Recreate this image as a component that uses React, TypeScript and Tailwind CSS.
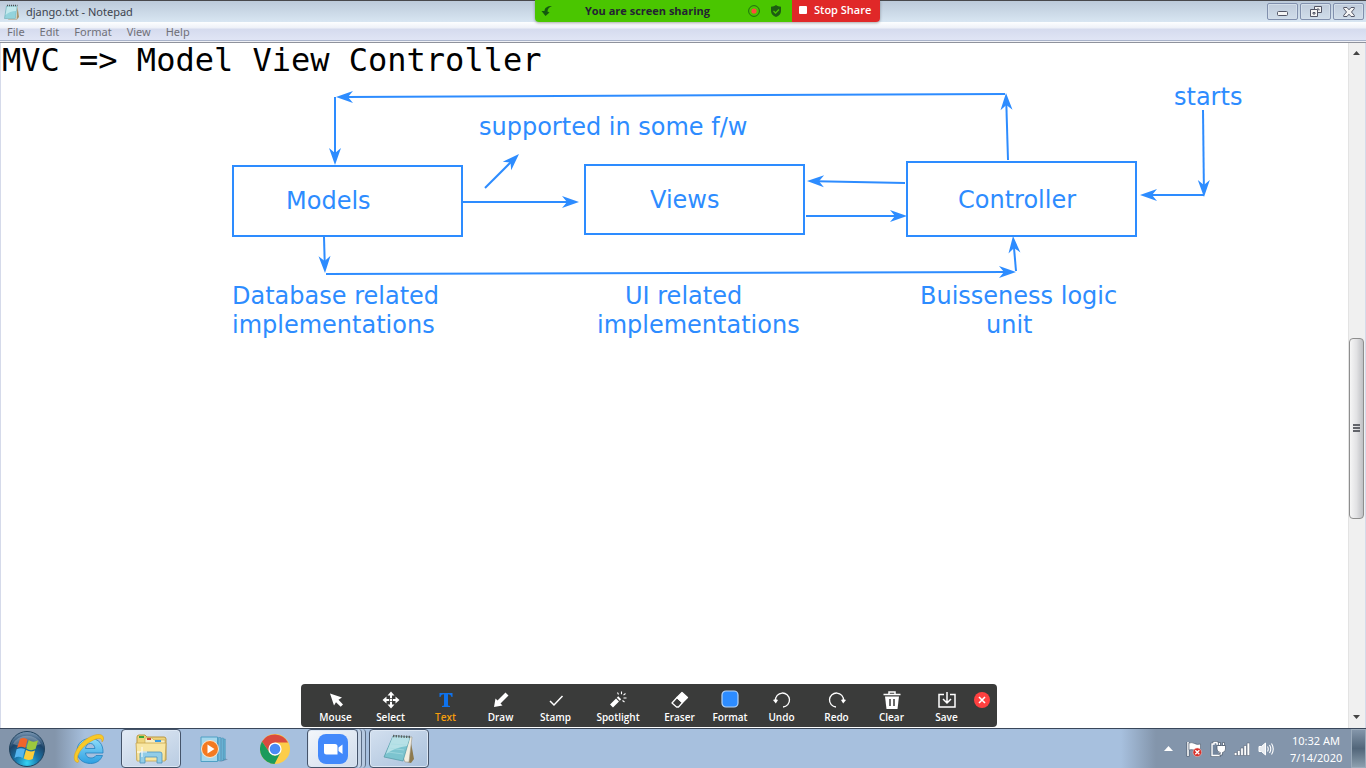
import type { ReactNode } from 'react';

type Point = [number, number];

const BLUE = '#2d8cff';

const arrows: [Point, Point][] = [
  [[1005, 94], [336, 97]],
  [[335, 97], [335, 165]],
  [[324, 237], [325, 273]],
  [[326, 274], [1016, 272]],
  [[1016, 271], [1013, 236]],
  [[1008, 160], [1006, 93]],
  [[463, 202], [579, 202]],
  [[485, 188], [519, 154]],
  [[905, 183], [807, 181]],
  [[806, 216], [907, 216]],
  [[1203, 110], [1204, 197]],
  [[1204, 195], [1140, 195]],
];

function Arrow({ from, to }: { from: Point; to: Point }) {
  const [x1, y1] = from;
  const [x2, y2] = to;
  const angle = (Math.atan2(y2 - y1, x2 - x1) * 180) / Math.PI;
  const length = Math.hypot(x2 - x1, y2 - y1);
  return (
    <g transform={`translate(${x2} ${y2}) rotate(${angle})`}>
      <path d={`M${-length} 0H-10`} stroke={BLUE} strokeWidth="2" />
      <path d="M0 0L-17 -6L-12 0L-17 6Z" fill={BLUE} />
    </g>
  );
}

function Diagram() {
  return (
    <section
      aria-label="MVC diagram"
      className="pointer-events-none absolute inset-0 overflow-hidden font-['DejaVu_Sans',sans-serif] text-2xl leading-[29px] text-[#2d8cff]"
    >
      <svg className="absolute left-0 top-0 h-[400px] w-[1340px]" viewBox="0 0 1340 400" fill="none" aria-hidden="true">
        {arrows.map(([from, to], i) => (
          <Arrow key={i} from={from} to={to} />
        ))}
      </svg>
      <div className="absolute left-[232px] top-[165px] flex h-[72px] w-[231px] items-center border-2 border-[#2d8cff] pl-[52px]">Models</div>
      <div className="absolute left-[584px] top-[164px] flex h-[71px] w-[221px] items-center border-2 border-[#2d8cff] pl-16 pt-0.5">Views</div>
      <div className="absolute left-[906px] top-[161px] flex h-[76px] w-[231px] items-center border-2 border-[#2d8cff] pl-[50px] pt-0.5">Controller</div>
      <p className="absolute left-[479px] top-[113px] whitespace-nowrap">supported in some f/w</p>
      <p className="absolute left-[1174px] top-[83px] whitespace-nowrap">starts</p>
      <p className="absolute left-[232px] top-[282px] whitespace-nowrap">
        Database related
        <br />
        implementations
      </p>
      <p className="absolute left-[597px] top-[282px] whitespace-nowrap indent-7">
        UI related
        <span className="block indent-0">implementations</span>
      </p>
      <p className="absolute left-[920px] top-[282px] whitespace-nowrap">
        Buisseness logic
        <span className="block pl-[66px]">unit</span>
      </p>
    </section>
  );
}

function NotepadIcon({ className }: { className: string }) {
  return (
    <svg className={className} viewBox="0 0 32 32" aria-hidden="true">
      <path d="M27 4l4 22-3 4-4-1z" fill="#8d7a4e" />
      <path d="M11 3L29 4L26 29L22 29Z" fill="#f3eee0" stroke="#9a9484" strokeWidth=".6" />
      <path d="M10 3L27 4L20 28L1 24Z" fill="#7cc4cf" stroke="#4f96a3" strokeWidth=".7" />
      <path d="M10 3L27 4L24 13Q13 14 3 21Z" fill="#c5e9ec" opacity=".8" />
      <path d="M10 3L27 4" stroke="#5a5f60" strokeWidth="2.4" strokeDasharray="1.4 1.2" />
      <path d="M8 11l15 1M6 15l15 2M5 19l15 2" stroke="#a9dce2" strokeWidth=".7" />
    </svg>
  );
}

function NotepadSmallIcon() {
  return (
    <svg className="size-4" viewBox="0 0 16 16" aria-hidden="true">
      <path d="M14.500 2.500L16 13l-2 2.500H5z" fill="#a8946c" />
      <path d="M4 2h10.500l-1 13H4z" fill="#f6f3ea" />
      <path d="M3.500 2H14l-1.500 12.500H1.500z" fill="#93d3dc" stroke="#68a9b4" strokeWidth=".6" />
      <path d="M4 2.500h9.500L13 7Q7 7 2.500 11z" fill="#cdeef0" opacity=".8" />
      <path d="M4 1.500h10.500" stroke="#4a5154" strokeWidth="1.600" strokeDasharray="1 1" />
    </svg>
  );
}

function TitleBar() {
  const control =
    'flex h-[17px] w-[31px] items-center justify-center rounded-[2px] border border-[#8190ad] bg-gradient-to-b from-[#bfcbdb] to-[#d0ddea] shadow-[inset_0_0_0_1px_#d3deea]';
  return (
    <header className="flex h-[22px] items-center justify-between border-t border-[#48484c] bg-gradient-to-b from-[#bccada] to-[#d8e6f2] pl-[3px] pr-[2px]">
      <div className="flex items-center gap-[7px]">
        <NotepadSmallIcon />
        <h1 className="font-['Noto_Sans',sans-serif] text-[11px] leading-4 text-[#3d444e]">django.txt - Notepad</h1>
      </div>
      <div className="flex gap-0.5">
        <button className={control} aria-label="Minimize">
          <svg className="mt-[3px] h-[5px] w-[11px]" viewBox="0 0 11 5">
            <rect x=".5" y=".5" width="10" height="4" rx="1" fill="#f4f4f4" stroke="#535666" />
          </svg>
        </button>
        <button className={control} aria-label="Restore">
          <svg className="h-[11px] w-[12px]" viewBox="0 0 12 11" fill="#f4f4f4" stroke="#535666">
            <path d="M4.500 .5h7v6h-7zM7 3h2v1.500" />
            <path d="M.5 3.500h7v7h-7zM3 6.500h2v1.500h-2z" />
          </svg>
        </button>
        <button className={control} aria-label="Close">
          <svg className="h-[10px] w-[12px]" viewBox="0 0 12 10" fill="#f4f4f4" stroke="#535666">
            <path d="M.7.500h3.300l2 2.300 2-2.300h3.300v1.200L8.500 5l2.800 3.300v1.200H8L6 7.200 4 9.500H.7V8.300L3.500 5 .7 1.700z" />
          </svg>
        </button>
      </div>
    </header>
  );
}

function ShareBar() {
  return (
    <div className="absolute left-[535px] top-0 flex h-[22px] overflow-hidden rounded-b font-['Open_Sans',sans-serif] shadow-[0_1px_3px_rgba(0,0,0,0.35)]">
      <div className="flex w-[257px] items-center bg-[#4ac600] pl-[6px] pr-[10px]">
        <svg className="size-3" viewBox="0 0 12 12" aria-hidden="true">
          <path d="M11 1C6 1 3.500 3 3.500 6H.5L4.500 11 8.500 7.500 6.500 6.500C6.500 4 8 2 11 1z" fill="#14590f" />
        </svg>
        <p className="flex-1 pr-1.5 text-center text-[11px] font-bold leading-4 text-[#232333]">You are screen sharing</p>
        <svg className="mr-2.5 size-3" viewBox="0 0 12 12" aria-hidden="true">
          <circle cx="6" cy="6" r="5.400" fill="none" stroke="#1e7010" />
          <circle cx="6" cy="6" r="2.600" fill="#ff4a3c" />
        </svg>
        <svg className="size-3" viewBox="0 0 12 12" aria-hidden="true">
          <path d="M6 0C4.500 1.200 3 1.600 1 1.700V6c0 3 2 5 5 6 3-1 5-3 5-6V1.700C9 1.600 7.500 1.200 6 0z" fill="#1d5c12" />
          <path d="M3.500 6l2 2L9 4.500" fill="none" stroke="#4ac600" strokeWidth="1.300" />
        </svg>
      </div>
      <button className="flex w-[88px] items-center gap-[7px] bg-[#e02828] pb-0.5 pl-[7px] text-[11px] font-semibold leading-4 text-white">
        <span className="size-2 rounded-[1px] bg-white" />
        <span className="whitespace-nowrap">Stop Share</span>
      </button>
    </div>
  );
}

function MenuBar() {
  return (
    <nav className="flex h-[21px] shrink-0 items-start gap-[15px] border-b border-[#8f929c] bg-[linear-gradient(#fdfeff_0,#eef1f8_6px,#d5dbee_7px,#e0e5f5_18px,#a9b3ca_18px,#a9b3ca_19px,#f0f1f6_19px)] pl-[7px] pt-0.5 font-['Noto_Sans',sans-serif] text-[11px] leading-4 text-[#707078]">
      {['File', 'Edit', 'Format', 'View', 'Help'].map((name) => (
        <button key={name}>{name}</button>
      ))}
    </nav>
  );
}

function ScrollBar() {
  return (
    <div className="flex w-[17px] shrink-0 flex-col items-center border-l border-[#e3e3e3] bg-[#f0f0f0] pr-px">
      <button className="flex h-[19px] w-full items-center justify-center" aria-label="Scroll up">
        <svg className="h-[4px] w-[7px]" viewBox="0 0 7 4"><path d="M0 4L3.500 0 7 4z" fill="#444" /></svg>
      </button>
      <div className="flex-[277]" />
      <div className="flex w-[15px] flex-[179] flex-col items-center justify-center gap-px rounded-sm border border-[#8e8e8e] bg-gradient-to-r from-[#f6f6f6] via-[#e2e2e4] to-[#bfc0c4]">
        <span className="h-0.5 w-[7px] bg-[#62646a]" />
        <span className="h-0.5 w-[7px] bg-[#62646a]" />
        <span className="h-0.5 w-[7px] bg-[#62646a]" />
      </div>
      <div className="flex-[189]" />
      <button className="flex h-[21px] w-full items-center justify-center" aria-label="Scroll down">
        <svg className="h-[4px] w-[7px]" viewBox="0 0 7 4"><path d="M0 0L3.500 4 7 0z" fill="#444" /></svg>
      </button>
    </div>
  );
}

const tools: { name: string; width: string; icon: ReactNode }[] = [
  { name: 'Mouse', width: 'w-[55px]', icon: <path d="M4 3.500l12 4-3.500 2.300 4.500 4.700-2.300 2.300L10 12.300 8 15.500z" fill="#fff" /> },
  {
    name: 'Select',
    width: 'w-[55px]',
    icon: (
      <g fill="#fff">
        <path d="M10 1.500l3.500 4h-7zM10 18.500l3.500-4h-7zM1.500 10l4-3.500v7zM18.500 10l-4-3.500v7z" />
        <path d="M9 5h2v3H9zM9 12h2v3H9zM5 9h3v2H5zM12 9h3v2h-3zM8.800 8.800h2.400v2.400H8.800z" />
      </g>
    ),
  },
  {
    name: 'Text',
    width: 'w-[55px]',
    icon: <path d="M3.500 3H16.500V7H15.500C15 5 14 4.200 12 4.200V15.500L14 16V17H6V16L8 15.500V4.200C6 4.200 5 5 4.500 7H3.500z" fill="#0e72ed" />,
  },
  { name: 'Draw', width: 'w-[55px]', icon: <path d="M14.500 2.500l3 3L9.500 13.500l2 2-8.500 1.500 1.500-8.500 2 2z" fill="#fff" /> },
  { name: 'Stamp', width: 'w-[55px]', icon: <path d="M4 11l4 4 8.500-9" fill="none" stroke="#fff" strokeWidth="1.500" /> },
  {
    name: 'Spotlight',
    width: 'w-[70px]',
    icon: (
      <g stroke="#fff" fill="none">
        <path d="M3.500 16l6-6M10.300 9.200l1.400-1.400" strokeWidth="4.200" />
        <path d="M9.500 2.500l1 2M13.500 1.500v2.700M17.500 3.500l-2 1.700M15.500 8H18.500M14.500 10.500l2 1.500" strokeWidth="1.100" />
      </g>
    ),
  },
  {
    name: 'Eraser',
    width: 'w-[53px]',
    icon: (
      <g stroke="#fff" strokeWidth="1.300" strokeLinejoin="round">
        <path d="M12 2.500l5.500 5-5 5L7 7.500z" fill="#fff" />
        <path d="M7 7.500l5.500 5L8.500 17H6.500L2 13z" fill="none" />
      </g>
    ),
  },
  {
    name: 'Format',
    width: 'w-[48px]',
    icon: <rect x="2" y="1" width="16" height="16" rx="4" fill={BLUE} stroke="#b9d6f6" strokeWidth="1.200" />,
  },
  {
    name: 'Undo',
    width: 'w-[55px]',
    icon: (
      <>
        <path d="M3.500 10.500A7 7 0 1 1 11 17" fill="none" stroke="#fff" strokeWidth="1.300" />
        <path d="M1 10q2.500-1.500 5 0L3.800 13.500z" fill="#fff" />
      </>
    ),
  },
  {
    name: 'Redo',
    width: 'w-[55px]',
    icon: (
      <>
        <path d="M16.500 10.500A7 7 0 1 0 9 17" fill="none" stroke="#fff" strokeWidth="1.300" />
        <path d="M19 10q-2.500-1.500-5 0l2.200 3.500z" fill="#fff" />
      </>
    ),
  },
  {
    name: 'Clear',
    width: 'w-[55px]',
    icon: (
      <>
        <path d="M7 4V2h6v2M1.500 4.500h17" fill="none" stroke="#fff" strokeWidth="1.500" />
        <path d="M3 6.500h14l-1.500 12.500h-11z" fill="#fff" />
        <path d="M8 9v7M12 9v7" stroke="#3a3a3a" strokeWidth="1.500" />
      </>
    ),
  },
  {
    name: 'Save',
    width: 'w-[55px]',
    icon: <path d="M7 4.500H2V17h16V4.500h-5M10 2v10.500M6 9l4 4 4-4" fill="none" stroke="#fff" strokeWidth="1.500" />,
  },
];

function AnnotationToolbar() {
  return (
    <div
      role="toolbar"
      aria-label="Annotation tools"
      className="absolute bottom-[41px] left-[301px] flex h-[43px] rounded bg-[#3a3b3a] px-[7px] font-['Open_Sans',sans-serif] text-[10px] font-semibold leading-3"
    >
      {tools.map(({ name, width, icon }) => (
        <button key={name} className={`${width} flex flex-col items-center gap-px pt-[6px] ${name === 'Text' ? 'text-[#f59d0c]' : 'text-white'}`}>
          <svg className="size-5" viewBox="0 0 20 20" aria-hidden="true">
            {icon}
          </svg>
          <span>{name}</span>
        </button>
      ))}
      <button className="mt-2 flex size-4 items-center justify-center rounded-full bg-[#ff4040]" aria-label="Close toolbar">
        <svg className="size-2" viewBox="0 0 8 8"><path d="M1 1l6 6M7 1L1 7" stroke="#fff" strokeWidth="1.600" /></svg>
      </button>
    </div>
  );
}

function StartOrb() {
  return (
    <svg className="size-[38px]" viewBox="0 0 38 38" aria-hidden="true">
      <defs>
        <radialGradient id="orb" cx=".5" cy=".9" r=".9">
          <stop offset="0" stopColor="#35d4f5" />
          <stop offset=".35" stopColor="#1a79ad" />
          <stop offset=".7" stopColor="#1d4469" />
          <stop offset="1" stopColor="#7f9cb8" />
        </radialGradient>
      </defs>
      <circle cx="19" cy="19" r="17.500" fill="url(#orb)" stroke="#21435e" />
      <path d="M5 14A15 13 0 0 1 33 14Q19 20 5 14z" fill="#fff" opacity=".25" />
      <path d="M12 9Q15.500 7 19.500 9.500L17.300 18Q13 15.500 9 18z" fill="#f0652b" />
      <path d="M20.700 10Q25 13 30 10.500L27.500 19Q22.500 21.500 18.300 18.500z" fill="#9cc83d" />
      <path d="M8.600 19.300Q13 17 17 19.300L14.600 28Q10.500 25.500 6.500 28z" fill="#55b5ef" />
      <path d="M18 20Q22.500 22.500 27 20.500L24.700 29Q20 31 15.700 28.500z" fill="#fccd3a" />
    </svg>
  );
}

function ExplorerBrowserIcon() {
  return (
    <svg className="size-[34px]" viewBox="0 0 34 34" aria-hidden="true">
      <defs>
        <linearGradient id="letter" x1="0" y1="0" x2="0" y2="1">
          <stop offset="0" stopColor="#8fdcf8" />
          <stop offset="1" stopColor="#2d9fe2" />
        </linearGradient>
      </defs>
      <path
        fillRule="evenodd"
        fill="url(#letter)"
        stroke="#2381bf"
        strokeWidth=".8"
        d="M31 21H13.500C14 24.500 16 26 19 26C21.500 26 23 25 24 23.500H30.500C28.500 28.500 24.500 31.500 18.500 31.500C10.500 31.500 5 26.500 5 19C5 11.500 10.500 6.500 18.500 6.500C26.500 6.500 31.500 12 31 21ZM13.500 16.500H23C22.500 13.500 21 11.500 18.500 11.500C15.500 11.500 14 13.500 13.500 16.500Z"
      />
      <path d="M6 30.500C-1 30 2 17 12 9C20 2 31 0 31.500 6C31.600 8 31 9 30 10C30.500 4 23 6 15 12C7 18 3 27 7 29z" fill="#f8c928" stroke="#d89b14" strokeWidth=".5" />
    </svg>
  );
}

function FolderIcon() {
  return (
    <svg className="h-[30px] w-[34px]" viewBox="0 0 34 30" aria-hidden="true">
      <path d="M3 3q0-2 2-2h6l2 2h17q2 0 2 2v21H3z" fill="#eed47c" stroke="#b99742" />
      <path d="M5 2h5v2H5z" fill="#35a83c" />
      <path d="M11 4h7l2 2h11v5H11z" fill="#f8efc4" stroke="#c4a653" strokeWidth=".6" />
      <path d="M13 4h4v2h-4z" fill="#cf4334" />
      <path d="M21 6h6v2h-6z" fill="#389be0" />
      <path d="M2 9h30l-1 18H3z" fill="#f8e6a2" stroke="#c6a44d" strokeWidth=".8" />
      <path d="M6 29v-9q0-2 2-2h18q2 0 2 2v9h-5v-6H11v6z" fill="#91cde8" stroke="#4c93bd" strokeWidth=".8" />
      <path d="M8 13v10M3 18h10" stroke="#fff" strokeWidth="1" />
    </svg>
  );
}

function MediaPlayerIcon() {
  return (
    <svg className="size-[30px]" viewBox="0 0 30 30" aria-hidden="true">
      <path d="M26 24l4 1.500L22 28z" fill="#7f95b3" />
      <path d="M3 3h16.500v24.500H3z" fill="#a5d7ec" stroke="#4fa0c4" />
      <path d="M20.500 3.500h2.200V27h-2.200zM23.600 4h1.800v22.500h-1.800zM26 5h1.300v20.500H26z" fill="#6fb8d8" stroke="#3b8cb2" strokeWidth=".5" />
      <circle cx="12" cy="15" r="8.500" fill="#f47a20" stroke="#fbe8d0" />
      <path d="M9.500 10.500v9l7-4.500z" fill="#fff" />
    </svg>
  );
}

function ChromeIcon() {
  return (
    <svg className="size-[30px]" viewBox="0 0 30 30" aria-hidden="true">
      <circle cx="15" cy="15" r="15" fill="#fccd49" />
      <path d="M15 8.500H28A15 15 0 0 0 2 7.500L9.400 18.300z" fill="#da4b3f" />
      <path d="M2 7.500A15 15 0 0 0 14.500 30L20.600 18.300 15 22 9.400 18.300z" fill="#1a9b5b" />
      <circle cx="15" cy="15" r="6.600" fill="#fff" />
      <circle cx="15" cy="15" r="5.300" fill="#4a8af4" />
    </svg>
  );
}

function ZoomIcon() {
  return (
    <svg className="size-[30px]" viewBox="0 0 30 30" aria-hidden="true">
      <rect width="30" height="30" rx="8" fill="#4289fb" />
      <path d="M6 10h11q2.500 0 2.500 2.500v8H8.500Q6 20.500 6 18zM20.500 13.500l4-3v9.500l-4-3z" fill="#fff" />
    </svg>
  );
}

function Tray() {
  return (
    <div className="flex items-center text-white">
      <div className="flex items-center gap-2 pr-4">
        <button className="mr-1 flex size-3 items-center justify-center" aria-label="Show hidden icons">
          <svg className="h-[5px] w-[9px]" viewBox="0 0 9 5"><path d="M0 5L4.500 0 9 5z" fill="#fff" /></svg>
        </button>
        <svg className="size-4" viewBox="0 0 16 16" aria-label="Action Center">
          <path d="M2 1v14.500" stroke="#4c596b" strokeWidth="3" />
          <path d="M2 1v14" stroke="#fff" strokeWidth="1.600" />
          <path d="M3 2q3-1 5.500.5t6 .5v7q-3 .5-6-.7T3 9z" fill="#fff" stroke="#4c596b" strokeWidth=".6" />
          <circle cx="11.300" cy="11.300" r="4.300" fill="#d72f29" stroke="#f7cfca" strokeWidth=".5" />
          <path d="M9.300 9.300l4 4M13.300 9.300l-4 4" stroke="#fff" strokeWidth="1.300" />
        </svg>
        <svg className="size-4" viewBox="0 0 16 16" aria-label="Power">
          <path d="M2 3h2V1.500h3V3h2.500v11.500H2z" fill="#74869d" stroke="#4c596b" strokeWidth="2.600" />
          <path d="M2 3h2V1.500h3V3h2.500v11.500H2z" fill="#74869d" stroke="#fff" strokeWidth="1.400" />
          <path d="M7 4.500h8.500V8q0 3-3 3.500V14H9v-1.500h1.300v-1Q7 11 7 8zM8.500 1.500h2v3h-2zM12.500 1.500h2v3h-2z" fill="#fff" stroke="#4c596b" strokeWidth=".7" />
        </svg>
        <svg className="size-4" viewBox="0 0 16 16" aria-label="Network">
          <path d="M.3 11.500h2.600v3H.3zM3.500 9.500h2.600v5H3.500zM6.700 7h2.600v7.500H6.700zM9.900 4.500h2.600v10H9.900zM13.100 2h2.600v12.500h-2.600z" fill="#fff" stroke="#4c596b" strokeWidth=".5" />
        </svg>
        <svg className="size-4" viewBox="0 0 16 16" aria-label="Volume" fill="none">
          <path d="M1 5.500h2.500L7.500 2v12l-4-3.500H1z" fill="#e7ebf0" stroke="#fff" />
          <path d="M9.500 5.500q1.500 2.500 0 5M11.500 4q2.500 4 0 8M13.500 2.500q3.500 5.500 0 11" stroke="#fff" strokeWidth="1.100" />
        </svg>
      </div>
      <div className="w-[52px] whitespace-nowrap text-center font-['Noto_Sans',sans-serif] text-[11px] leading-[17px]">
        <p>10:32 AM</p>
        <p>7/14/2020</p>
      </div>
      <button
        className="ml-[9px] h-[39px] w-[15px] border border-[#9babbb] bg-gradient-to-b from-[#8496aa] via-[#52667a] to-[#8c9fae]"
        aria-label="Show desktop"
      />
    </div>
  );
}

function Taskbar() {
  const task = 'flex h-[39px] items-center justify-center rounded-sm border border-[#45546a] shadow-[inset_0_0_0_1px_#dce7f4]';
  return (
    <footer className="flex h-10 shrink-0 items-center justify-between border-t border-[#39475a] bg-[linear-gradient(90deg,#8395ab_0,#8395ab_55px,#a7c0de_85px,#a7c0de_calc(100%_-_245px),#8395ab_calc(100%_-_210px))] pl-2">
      <div className="flex items-center">
        <button aria-label="Start"><StartOrb /></button>
        <button className="ml-[26px] flex w-[34px] justify-center" aria-label="Internet Explorer"><ExplorerBrowserIcon /></button>
        <button className={`${task} ml-[15px] w-[60px] bg-gradient-to-br from-[#e3ebf5] to-[#b9cce2]`} aria-label="Windows Explorer"><FolderIcon /></button>
        <button className="ml-[17px]" aria-label="Media Player"><MediaPlayerIcon /></button>
        <button className="ml-8" aria-label="Chrome"><ChromeIcon /></button>
        <div className="ml-[17px] flex">
          <button className={`${task} w-[51px] bg-gradient-to-br from-[#f3f7fb] to-[#d0dceb]`} aria-label="Zoom"><ZoomIcon /></button>
          <span className="h-[39px] w-1 rounded-r-sm border-r border-[#5b6d85] bg-[#c5d4e6]" />
          <span className="h-[39px] w-1 rounded-r-sm border-r border-[#5b6d85] bg-[#b6c9e0]" />
        </div>
        <button className={`${task} ml-[3px] w-[60px] bg-gradient-to-br from-[#d3e0ef] to-[#aac1dc]`} aria-label="Notepad"><NotepadIcon className="size-8" /></button>
      </div>
      <Tray />
    </footer>
  );
}

export default function App() {
  return (
    <div className="relative flex min-h-screen flex-col overflow-hidden bg-white">
      <TitleBar />
      <MenuBar />
      <main className="flex flex-1 border-x border-[#d5daea]">
        <textarea
          aria-label="Document text"
          spellCheck={false}
          className="flex-1 resize-none overflow-hidden bg-white pl-px pt-px font-['DejaVu_Sans_Mono',monospace] text-[32px] leading-8 text-black outline-none"
          defaultValue="MVC => Model View Controller"
        />
        <ScrollBar />
      </main>
      <Taskbar />
      <Diagram />
      <ShareBar />
      <AnnotationToolbar />
    </div>
  );
}
